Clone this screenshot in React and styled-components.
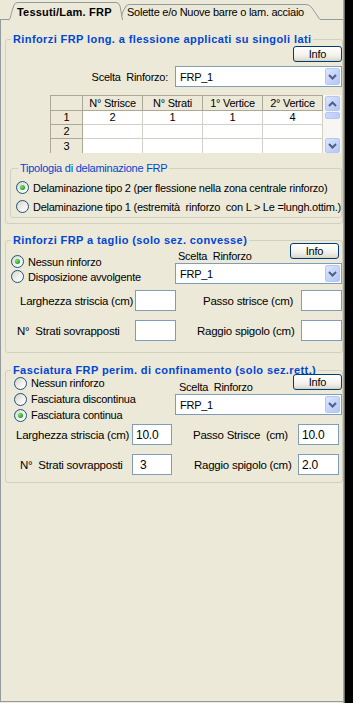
import React from 'react';
import styled, { createGlobalStyle } from 'styled-components';

const FACE = '#ECE9D8';
const TITLE_BLUE = '#0046D5';

const GlobalStyle = createGlobalStyle`
  html, body { margin: 0; padding: 0; background: #000; }
  body {
    font-family: "Liberation Sans", Arial, sans-serif;
    font-size: 11px;
    letter-spacing: -0.25px;
    color: #000;
  }
`;

const Window = styled.div`
  width: 344px;
  height: 703px;
  box-sizing: border-box;
  background: ${FACE};
  border-right: 1px solid #A7A69C;
  box-shadow: 1px 0 0 #716F64;
  display: flex;
  flex-direction: column;
  white-space: pre;
  overflow: hidden;
`;

/* ---------- tabs ---------- */

const TabStrip = styled.div`
  height: 20px;
  display: flex;
  align-items: flex-end;
  padding-left: 8px;
`;

const TabItem = styled.div`
  position: relative;
  z-index: ${(p) => (p.$active ? 3 : 2)};
  width: ${(p) => p.$w}px;
  height: ${(p) => (p.$active ? 18 : 15)}px;
  margin-left: ${(p) => (p.$active ? 0 : -4)}px;
  margin-bottom: ${(p) => (p.$active ? 0 : 1)}px;
  box-sizing: border-box;
  padding: ${(p) => (p.$active ? '4px 0 0 9px' : '2px 0 0 7px')};
  font-weight: ${(p) => (p.$active ? 700 : 400)};
  letter-spacing: ${(p) => (p.$active ? '0.2px' : '-0.25px')};
  line-height: 13px;

  svg {
    position: absolute;
    left: 0;
    top: 0;
    z-index: -1;
  }
`;

const Tab = ({ active, w, children }) => {
  const h = active ? 18 : 15;
  const d = active
    ? `M0.5,${h} C2,${h} 3,13 4,9 L6,3 Q7,0.5 10,0.5 L${w - 8},0.5 Q${w - 5},0.5 ${w - 4},4 L${w - 1.5},${h}`
    : `M0.5,${h} Q3,6 6,2 Q7.5,0.5 10,0.5 L${w - 14},0.5 Q${w - 10},0.5 ${w - 8},4 L${w - 0.5},${h}`;
  return (
    <TabItem $active={active} $w={w}>
      <svg width={w} height={h + 1} viewBox={`0 0 ${w} ${h + 1}`}>
        <path d={`${d} L${w},${h + 1} L0,${h + 1} Z`} fill={FACE} stroke="none" />
        <path d={d} fill="none" stroke="#919B9C" strokeWidth="1" />
      </svg>
      {children}
    </TabItem>
  );
};

/* ---------- panel & groups ---------- */

const Panel = styled.div`
  margin-top: -1px;
  height: 683px;
  box-sizing: border-box;
  border: 1px solid #919B9C;
  border-right: none;
  padding: 19px 0 0 4px;
  display: flex;
  flex-direction: column;
`;

const Group = styled.div`
  border: 1px solid #D0D0BF;
  border-radius: 3px;
  margin-top: ${(p) => p.$mt || 0}px;
  margin-left: ${(p) => p.$ml || 0}px;
  padding-bottom: ${(p) => p.$pb || 0}px;
  display: flex;
  flex-direction: column;
`;

const Legend = styled.div`
  align-self: flex-start;
  margin: -7px 0 ${(p) => p.$after || 0}px ${(p) => p.$indent || 0}px;
  padding: 0 2px;
  background: ${FACE};
  line-height: 13px;
  color: ${TITLE_BLUE};
  font-weight: ${(p) => (p.$bold ? 700 : 400)};
  letter-spacing: ${(p) => (p.$bold ? '0.4px' : '-0.25px')};
`;

/* ---------- controls ---------- */

const InfoButton = styled.button`
  width: ${(p) => p.$w || 49}px;
  height: 16px;
  padding: 0;
  margin-right: ${(p) => p.$mr || 0}px;
  border: 1px solid #003C74;
  border-radius: 3px;
  background: linear-gradient(#FFFFFF 0%, #F4F3EE 55%, #E3E0D5 88%, #D2CDC0 100%);
  font: inherit;
  letter-spacing: inherit;
  line-height: 13px;
  color: #000;
`;

const Combo = styled.div`
  width: 167px;
  height: 21px;
  box-sizing: border-box;
  border: 1px solid #7F9DB9;
  background: #fff;
  display: flex;
  align-items: center;
  justify-content: space-between;
  padding: 1px 1px 1px 4px;
`;

const BlueButton = styled.span`
  width: ${(p) => p.$w || 15}px;
  height: ${(p) => p.$h || 15}px;
  align-self: ${(p) => (p.$stretch ? 'stretch' : 'auto')};
  box-sizing: border-box;
  border: 1px solid #B5C8F2;
  border-radius: 2px;
  background: linear-gradient(135deg, #DCE6FD 0%, #C6D5FB 50%, #B3C6F3 100%);
  display: flex;
  align-items: center;
  justify-content: center;
`;

const Chevron = ({ up }) => (
  <svg width="9" height="6" viewBox="0 0 9 6">
    <path
      d={up ? 'M1 5 L4.5 1.5 L8 5' : 'M1 1 L4.5 4.5 L8 1'}
      fill="none"
      stroke="#4D6185"
      strokeWidth="2"
    />
  </svg>
);

const ComboBox = ({ value }) => (
  <Combo>
    <span>{value}</span>
    <BlueButton $stretch $h={17}>
      <Chevron />
    </BlueButton>
  </Combo>
);

const RadioDot = styled.span`
  width: 13px;
  height: 13px;
  box-sizing: border-box;
  border-radius: 50%;
  border: 1px solid #1C5180;
  background: linear-gradient(135deg, #D8D5C9 0%, #F1F0EA 55%, #FFFFFF 100%);
  display: flex;
  align-items: center;
  justify-content: center;
  flex-shrink: 0;

  &::after {
    content: '';
    display: ${(p) => (p.$on ? 'block' : 'none')};
    width: 5px;
    height: 5px;
    border-radius: 50%;
    background: radial-gradient(circle at 35% 35%, #7BE37B 0%, #2DB42D 55%, #1A8F1A 100%);
  }
`;

const RadioRow = styled.div`
  height: ${(p) => p.$h}px;
  margin-bottom: ${(p) => p.$gap || 0}px;
  display: flex;
  align-items: center;
  gap: 4px;
`;

const Radio = ({ on, h, gap, children }) => (
  <RadioRow $h={h} $gap={gap}>
    <RadioDot $on={on} />
    <span>{children}</span>
  </RadioRow>
);

const TextBox = styled.input`
  width: 100%;
  height: 21px;
  box-sizing: border-box;
  margin: 0;
  border: 1px solid #7F9DB9;
  background: #fff;
  padding: 0 0 0 ${(p) => p.$pl || 3}px;
  font: inherit;
  font-size: 12px;
  letter-spacing: inherit;
  color: #000;
  outline: none;
`;

/* ---------- group 1 parts ---------- */

const InfoRow = styled.div`
  display: flex;
  justify-content: flex-end;
`;

const ChoiceRow = styled.div`
  display: flex;
  justify-content: flex-end;
  align-items: center;
  gap: 7px;
  margin-top: 4px;
`;

const TableWrap = styled.div`
  display: flex;
  width: 291px;
  height: 58px;
  margin: 8px 0 0 44px;
`;

const Grid = styled.div`
  display: grid;
  grid-template-columns: 32px repeat(4, 60px);
  grid-template-rows: 15px repeat(3, 14px);
  width: 273px;
  box-sizing: border-box;
  border-top: 1px solid #ACA899;
  border-left: 1px solid #ACA899;
`;

const Cell = styled.div`
  background: ${(p) => (p.$head ? FACE : '#fff')};
  border-right: 1px solid ${(p) => (p.$head ? '#ACA899' : '#D4D0C8')};
  border-bottom: ${(p) => (p.$last ? 'none' : `1px solid ${p.$head ? '#ACA899' : '#D4D0C8'}`)};
  display: flex;
  align-items: center;
  justify-content: center;
  line-height: 13px;
  overflow: hidden;
`;

const ScrollBar = styled.div`
  width: 18px;
  box-sizing: border-box;
  padding: 1px 1px 0 2px;
  background: #F7F6F2;
  display: flex;
  flex-direction: column;
  gap: 1px;
`;

const Thumb = styled.span`
  height: 7px;
  box-sizing: border-box;
  border: 1px solid #B5C8F2;
  border-radius: 2px;
  background: linear-gradient(90deg, #CAD8FB, #BACCF5);
`;

const Spacer = styled.span`
  flex: 1;
`;

const Inner = styled.div`
  margin: 15px 0 0 4px;
  border: 1px solid #D0D0BF;
  border-radius: 3px;
  padding: 0 0 2px 5px;
  display: flex;
  flex-direction: column;
`;

/* ---------- groups 2 & 3 parts ---------- */

const Columns = styled.div`
  display: flex;
`;

const RadioColumn = styled.div`
  width: 169px;
  box-sizing: border-box;
  margin-top: ${(p) => p.$mt}px;
  padding-left: ${(p) => p.$pl}px;
  display: flex;
  flex-direction: column;
`;

const PickColumn = styled.div`
  width: 167px;
  margin-top: ${(p) => p.$mt}px;
  display: flex;
  flex-direction: column;
`;

const PickHead = styled.div`
  height: 20px;
  display: flex;
  justify-content: space-between;
  align-items: flex-start;
  padding-left: ${(p) => p.$pl}px;
`;

const PickLabel = styled.span`
  margin-top: 7px;
  line-height: 13px;
`;

const FieldGrid = styled.div`
  display: grid;
  grid-template-columns: ${(p) => p.$cols};
  grid-auto-rows: 21px;
  row-gap: 9px;
  margin-top: ${(p) => p.$mt}px;
`;

const FieldLabel = styled.span`
  display: flex;
  align-items: center;
  padding-left: ${(p) => p.$indent}px;
  font-size: 11.5px;
`;

const rows = [
  ['1', '2', '1', '1', '4'],
  ['2', '', '', '', ''],
  ['3', '', '', '', ''],
];

export default function App() {
  return (
    <>
      <GlobalStyle />
      <Window>
        <TabStrip>
          <Tab active w={116}>Tessuti/Lam. FRP</Tab>
          <Tab w={200}>Solette e/o Nuove barre o lam. acciaio</Tab>
        </TabStrip>

        <Panel>
          {/* Rinforzi longitudinali */}
          <Group $pb={5}>
            <Legend $bold $indent={5}>Rinforzi FRP long. a flessione applicati su singoli lati</Legend>
            <InfoRow>
              <InfoButton>Info</InfoButton>
            </InfoRow>
            <ChoiceRow>
              <span>Scelta  Rinforzo:</span>
              <ComboBox value="FRP_1" />
            </ChoiceRow>

            <TableWrap>
              <Grid>
                <Cell $head />
                <Cell $head>N° Strisce</Cell>
                <Cell $head>N° Strati</Cell>
                <Cell $head>1° Vertice</Cell>
                <Cell $head>2° Vertice</Cell>
                {rows.map((r, i) =>
                  r.map((v, j) => (
                    <Cell key={`${i}-${j}`} $head={j === 0} $last={i === rows.length - 1}>
                      {v}
                    </Cell>
                  ))
                )}
              </Grid>
              <ScrollBar>
                <BlueButton>
                  <Chevron up />
                </BlueButton>
                <Thumb />
                <Spacer />
                <BlueButton>
                  <Chevron />
                </BlueButton>
              </ScrollBar>
            </TableWrap>

            <Inner>
              <Legend $indent={2} $after={4}>Tipologia di delaminazione FRP</Legend>
              <Radio on h={17} gap={2}>Delaminazione tipo 2 (per flessione nella zona centrale rinforzo)</Radio>
              <Radio h={17}>Delaminazione tipo 1 (estremità  rinforzo  con L &gt; Le =lungh.ottim.)</Radio>
            </Inner>
          </Group>

          {/* Rinforzi a taglio */}
          <Group $mt={16} $pb={11}>
            <Legend $bold $indent={5}>Rinforzi FRP a taglio (solo sez. convesse)</Legend>
            <Columns>
              <RadioColumn $mt={7} $pl={5}>
                <Radio on h={15}>Nessun rinforzo</Radio>
                <Radio h={15}>Disposizione avvolgente</Radio>
              </RadioColumn>
              <PickColumn $mt={-4}>
                <PickHead $pl={3}>
                  <PickLabel>Scelta  Rinforzo</PickLabel>
                  <InfoButton $mr={3}>Info</InfoButton>
                </PickHead>
                <ComboBox value="FRP_1" />
              </PickColumn>
            </Columns>
            <FieldGrid $mt={6} $cols="129px 41px 125px 41px">
              <FieldLabel $indent={14}>Larghezza striscia (cm)</FieldLabel>
              <TextBox readOnly value="" />
              <FieldLabel $indent={27}>Passo strisce (cm)</FieldLabel>
              <TextBox readOnly value="" />
              <FieldLabel $indent={11}>N°  Strati sovrapposti</FieldLabel>
              <TextBox readOnly value="" />
              <FieldLabel $indent={21}>Raggio spigolo (cm)</FieldLabel>
              <TextBox readOnly value="" />
            </FieldGrid>
          </Group>

          {/* Fasciatura di confinamento */}
          <Group $mt={17} $pb={7}>
            <Legend $bold $indent={5}>Fasciatura FRP perim. di confinamento (solo sez.rett.)</Legend>
            <Columns>
              <RadioColumn $mt={-2} $pl={8}>
                <Radio h={16}>Nessun rinforzo</Radio>
                <Radio h={16}>Fasciatura discontinua</Radio>
                <Radio on h={16}>Fasciatura continua</Radio>
              </RadioColumn>
              <PickColumn $mt={-3}>
                <PickHead $pl={4}>
                  <PickLabel>Scelta  Rinforzo</PickLabel>
                  <InfoButton>Info</InfoButton>
                </PickHead>
                <ComboBox value="FRP_1" />
              </PickColumn>
            </Columns>
            <FieldGrid $mt={1} $cols="126px 40px 126px 41px">
              <FieldLabel $indent={10}>Larghezza striscia (cm)</FieldLabel>
              <TextBox readOnly value="10.0" />
              <FieldLabel $indent={21}>Passo Strisce  (cm)</FieldLabel>
              <TextBox readOnly value="10.0" />
              <FieldLabel $indent={14}>N°  Strati sovrapposti</FieldLabel>
              <TextBox readOnly value="3" $pl={7} />
              <FieldLabel $indent={22}>Raggio spigolo (cm)</FieldLabel>
              <TextBox readOnly value="2.0" />
            </FieldGrid>
          </Group>
        </Panel>
      </Window>
    </>
  );
}
